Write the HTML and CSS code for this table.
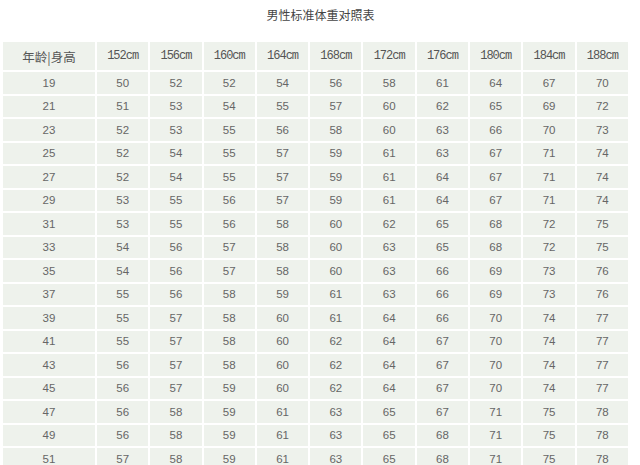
FILE: index.html
```html
<!DOCTYPE html>
<html lang="zh">
<head>
<meta charset="utf-8">
<link rel="stylesheet" href="styles.css">
</head>
<body>
<div class="page">
<h1 class="title">男性标准体重对照表</h1>
<table class="chart">
<colgroup><col class="c-first"><col><col><col><col><col><col><col><col><col><col></colgroup>
<thead>
<tr class="head"><th class="lbl">年龄|身高</th><th>152cm</th><th>156cm</th><th>160cm</th><th>164cm</th><th>168cm</th><th>172cm</th><th>176cm</th><th>180cm</th><th>184cm</th><th>188cm</th></tr>
</thead>
<tbody>
<tr><td>19</td><td>50</td><td>52</td><td>52</td><td>54</td><td>56</td><td>58</td><td>61</td><td>64</td><td>67</td><td>70</td></tr>
<tr><td>21</td><td>51</td><td>53</td><td>54</td><td>55</td><td>57</td><td>60</td><td>62</td><td>65</td><td>69</td><td>72</td></tr>
<tr><td>23</td><td>52</td><td>53</td><td>55</td><td>56</td><td>58</td><td>60</td><td>63</td><td>66</td><td>70</td><td>73</td></tr>
<tr><td>25</td><td>52</td><td>54</td><td>55</td><td>57</td><td>59</td><td>61</td><td>63</td><td>67</td><td>71</td><td>74</td></tr>
<tr><td>27</td><td>52</td><td>54</td><td>55</td><td>57</td><td>59</td><td>61</td><td>64</td><td>67</td><td>71</td><td>74</td></tr>
<tr><td>29</td><td>53</td><td>55</td><td>56</td><td>57</td><td>59</td><td>61</td><td>64</td><td>67</td><td>71</td><td>74</td></tr>
<tr><td>31</td><td>53</td><td>55</td><td>56</td><td>58</td><td>60</td><td>62</td><td>65</td><td>68</td><td>72</td><td>75</td></tr>
<tr><td>33</td><td>54</td><td>56</td><td>57</td><td>58</td><td>60</td><td>63</td><td>65</td><td>68</td><td>72</td><td>75</td></tr>
<tr><td>35</td><td>54</td><td>56</td><td>57</td><td>58</td><td>60</td><td>63</td><td>66</td><td>69</td><td>73</td><td>76</td></tr>
<tr><td>37</td><td>55</td><td>56</td><td>58</td><td>59</td><td>61</td><td>63</td><td>66</td><td>69</td><td>73</td><td>76</td></tr>
<tr><td>39</td><td>55</td><td>57</td><td>58</td><td>60</td><td>61</td><td>64</td><td>66</td><td>70</td><td>74</td><td>77</td></tr>
<tr><td>41</td><td>55</td><td>57</td><td>58</td><td>60</td><td>62</td><td>64</td><td>67</td><td>70</td><td>74</td><td>77</td></tr>
<tr><td>43</td><td>56</td><td>57</td><td>58</td><td>60</td><td>62</td><td>64</td><td>67</td><td>70</td><td>74</td><td>77</td></tr>
<tr><td>45</td><td>56</td><td>57</td><td>59</td><td>60</td><td>62</td><td>64</td><td>67</td><td>70</td><td>74</td><td>77</td></tr>
<tr><td>47</td><td>56</td><td>58</td><td>59</td><td>61</td><td>63</td><td>65</td><td>67</td><td>71</td><td>75</td><td>78</td></tr>
<tr><td>49</td><td>56</td><td>58</td><td>59</td><td>61</td><td>63</td><td>65</td><td>68</td><td>71</td><td>75</td><td>78</td></tr>
<tr><td>51</td><td>57</td><td>58</td><td>59</td><td>61</td><td>63</td><td>65</td><td>68</td><td>71</td><td>75</td><td>78</td></tr>
</tbody>
</table>
</div>
</body>
</html>
```

FILE: styles.css
```css
html, body {
  margin: 0;
  padding: 0;
  background: #ffffff;
}
.page {
  padding: 0 0 0 1px;
  font-family: "Liberation Sans", "Noto Sans CJK SC", sans-serif;
  color: #555555;
}
.title {
  margin: 0;
  height: 40px;
  padding-top: 7px;
  box-sizing: border-box;
  text-align: center;
  font-size: 12px;
  line-height: 16px;
  font-weight: normal;
  color: #444444;
  font-family: "Noto Sans CJK SC", sans-serif;
}
.chart {
  width: 629px;
  table-layout: fixed;
  border-collapse: separate;
  border-spacing: 2px;
}
.c-first {
  width: 92px;
}
.chart th, .chart td {
  background: #eef2ec;
  text-align: center;
  padding: 0;
}
.chart th {
  height: 28px;
  font-weight: normal;
  font-family: "Liberation Mono", monospace;
  font-size: 12px;
  letter-spacing: -1px;
  color: #555555;
}
.chart th.lbl {
  font-family: "Noto Sans CJK SC", sans-serif;
  font-size: 12.5px;
  letter-spacing: 0;
}
.chart td {
  height: 21.5px;
  font-size: 11.5px;
  color: #666666;
}
```
